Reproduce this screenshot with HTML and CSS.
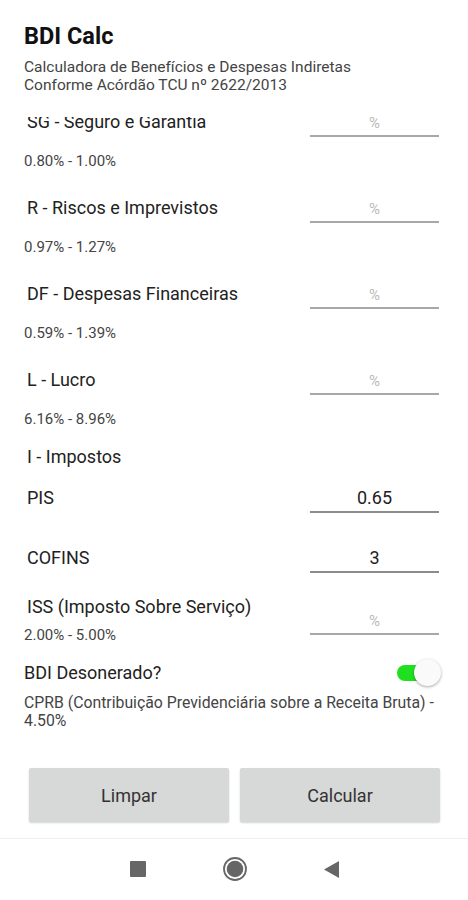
FILE: index.html
```html
<!DOCTYPE html>
<html>
<head>
<meta charset="utf-8">
<title>BDI Calc</title>
<link rel="stylesheet" href="styles.css">
</head>
<body>
<div class="app">
	<div class="header">
		<h1 class="title">BDI Calc</h1>
		<p class="subtitle">Calculadora de Benefícios e Despesas Indiretas<br>Conforme Acórdão TCU nº 2622/2013</p>
	</div>

	<div class="scroll">
		<div class="form">
			<div class="field">
				<span class="label">SG - Seguro e Garantia</span>
				<input class="num" type="text" placeholder="%">
			</div>
			<div class="range">0.80% - 1.00%</div>

			<div class="field">
				<span class="label">R - Riscos e Imprevistos</span>
				<input class="num" type="text" placeholder="%">
			</div>
			<div class="range">0.97% - 1.27%</div>

			<div class="field">
				<span class="label">DF - Despesas Financeiras</span>
				<input class="num" type="text" placeholder="%">
			</div>
			<div class="range">0.59% - 1.39%</div>

			<div class="field">
				<span class="label">L - Lucro</span>
				<input class="num" type="text" placeholder="%">
			</div>
			<div class="range">6.16% - 8.96%</div>

			<div class="section">I - Impostos</div>

			<div class="field tax">
				<span class="label">PIS</span>
				<input class="num filled" type="text" value="0.65">
			</div>

			<div class="field tax cofins">
				<span class="label">COFINS</span>
				<input class="num filled" type="text" value="3">
			</div>

			<div class="field iss">
				<div class="stack">
					<span class="label">ISS (Imposto Sobre Serviço)</span>
					<span class="range inline">2.00% - 5.00%</span>
				</div>
				<input class="num" type="text" placeholder="%">
			</div>

			<div class="switch-row">
				<span class="switch-label">BDI Desonerado?</span>
				<div class="switch">
					<span class="track"></span>
					<span class="thumb"></span>
				</div>
			</div>
			<div class="note">CPRB (Contribuição Previdenciária sobre a Receita Bruta) - 4.50%</div>
		</div>
	</div>

	<div class="actions">
		<button class="btn">Limpar</button>
		<button class="btn">Calcular</button>
	</div>

	<div class="navbar">
		<svg width="16" height="16" viewBox="0 0 16 16"><rect x="0" y="0" width="16" height="16" rx="1" fill="#666"/></svg>
		<svg width="24" height="24" viewBox="0 0 24 24"><circle cx="12" cy="12" r="11" fill="none" stroke="#666" stroke-width="1.8"/><circle cx="12" cy="12" r="8.3" fill="#666"/></svg>
		<svg width="15" height="17" viewBox="0 0 15 17"><path d="M15 0 L15 17 L0 8.5 Z" fill="#666"/></svg>
	</div>
</div>
</body>
</html>
```

FILE: styles.css
```css
*{margin:0;padding:0;box-sizing:border-box;}
body{background:#fff;font-family:Roboto,"Liberation Sans",sans-serif;color:#222;}

.app{width:468px;height:900px;display:flex;flex-direction:column;overflow:hidden;}

/* header */
.header{height:117px;padding:22px 24px 0 24px;flex:none;background:#fff;position:relative;z-index:1;}
.title{font-size:23.5px;line-height:28px;font-weight:700;color:#111;}
.subtitle{margin-top:8px;font-size:15.5px;line-height:18px;color:#444;}

/* scrolling form */
.scroll{flex:1;overflow:hidden;}
.form{margin-top:-10px;}

.field{display:flex;align-items:center;justify-content:space-between;height:30px;padding:0 29px 0 27px;margin-top:23px;}
.field:first-child{margin-top:0;}
.label{font-size:18px;line-height:22px;color:#222;}

.num{width:129px;height:30px;border:none;border-bottom:2px solid #a8a8a8;outline:none;background:transparent;
text-align:center;font-family:Roboto,"Liberation Sans",sans-serif;font-size:18px;color:#222;padding:0;}
.num::placeholder{font-size:15px;color:#bbb;}
.num.filled{border-bottom-color:#8c8c8c;}

.range{margin-top:15px;padding-left:24px;font-size:15px;line-height:18px;color:#444;}
.range.inline{margin-top:8px;padding-left:0;margin-left:-3px;}

.section{margin-top:18px;padding-left:27px;font-size:18px;line-height:22px;color:#222;}
.field.tax{margin-top:15px;}
.field.cofins{margin-top:30px;}

.field.iss{height:48px;margin-top:23px;}
.stack{display:flex;flex-direction:column;}

/* switch */
.switch-row{display:flex;align-items:center;justify-content:space-between;height:30px;margin-top:14px;padding:0 27px 0 24px;}
.switch-label{font-size:18px;line-height:22px;color:#222;}
.switch{position:relative;width:44px;height:28px;}
.track{position:absolute;left:0;top:6px;width:34px;height:16px;border-radius:8px;background:#1fe01f;}
.thumb{position:absolute;right:0;top:0;width:27px;height:27px;border-radius:50%;background:#fafafa;
box-shadow:0 1px 3px rgba(0,0,0,0.35);}

.note{margin-top:6px;padding:0 24px;font-size:15.8px;line-height:18px;color:#444;}

/* buttons */
.actions{flex:none;display:flex;gap:11px;padding:0 28px 16px 29px;}
.btn{flex:1;height:54px;border:none;border-radius:2px;background:#d7d8d8;
box-shadow:0 1px 2px rgba(0,0,0,0.18);font-family:Roboto,"Liberation Sans",sans-serif;font-size:18px;color:#333;}

/* system nav */
.navbar{flex:none;height:62px;border-top:1px solid #eee;display:flex;align-items:center;justify-content:center;gap:77px;padding-left:1px;padding-bottom:1px;}
```
